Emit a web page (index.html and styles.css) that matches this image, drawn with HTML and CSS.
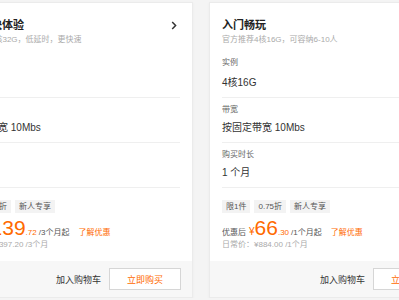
FILE: index.html
```html
<!DOCTYPE html>
<html lang="zh-CN">
<head>
    <meta charset="UTF-8">
    <meta name="viewport" content="width=device-width, initial-scale=1.0">
    <title>游戏服务器套餐</title>
    <link rel="stylesheet" href="styles.css">
</head>
<body>
    <div class="plans">
        <!-- Plan 1 -->
        <div class="plan">
            <div class="plan-body">
                <div class="plan-head">
                    <h2 class="plan-title">极致畅快体验</h2>
                    <svg class="plan-arrow" width="6" height="9" viewBox="0 0 6 9">
                        <path d="M1.2 1 L4.6 4.5 L1.2 8" fill="none" stroke="#333" stroke-width="1.5"/>
                    </svg>
                </div>
                <p class="plan-desc">官方推荐8核32G，低延时，更快速</p>

                <div class="spec first">
                    <div class="spec-label">实例</div>
                    <div class="spec-value">8核32G</div>
                </div>
                <div class="spec">
                    <div class="spec-label">带宽</div>
                    <div class="spec-value">按固定带宽 10Mbs</div>
                </div>
                <div class="spec">
                    <div class="spec-label">购买时长</div>
                    <div class="spec-value">3 个月</div>
                </div>

                <div class="tags">
                    <span class="tag">限1件</span>
                    <span class="tag">1折</span>
                    <span class="tag">新人专享</span>
                </div>
                <div class="price-row">
                    <span class="price-pre">优惠后</span><span class="price-cur">¥</span><span class="price-int">139</span><span class="price-dec">.72</span><span class="price-unit">/3个月起</span><span class="price-link">了解优惠</span>
                </div>
                <div class="price-old">日常价：¥1397.20 /3个月</div>
            </div>
            <div class="plan-foot">
                <span class="cart">加入购物车</span>
                <button class="buy">立即购买</button>
            </div>
        </div>

        <!-- Plan 2 -->
        <div class="plan">
            <div class="plan-body">
                <div class="plan-head">
                    <h2 class="plan-title">入门畅玩</h2>
                    <svg class="plan-arrow" width="6" height="9" viewBox="0 0 6 9">
                        <path d="M1.2 1 L4.6 4.5 L1.2 8" fill="none" stroke="#333" stroke-width="1.5"/>
                    </svg>
                </div>
                <p class="plan-desc">官方推荐4核16G，可容纳6-10人</p>

                <div class="spec first">
                    <div class="spec-label">实例</div>
                    <div class="spec-value">4核16G</div>
                </div>
                <div class="spec">
                    <div class="spec-label">带宽</div>
                    <div class="spec-value">按固定带宽 10Mbs</div>
                </div>
                <div class="spec">
                    <div class="spec-label">购买时长</div>
                    <div class="spec-value">1 个月</div>
                </div>

                <div class="tags">
                    <span class="tag">限1件</span>
                    <span class="tag">0.75折</span>
                    <span class="tag">新人专享</span>
                </div>
                <div class="price-row">
                    <span class="price-pre">优惠后</span><span class="price-cur">¥</span><span class="price-int">66</span><span class="price-dec">.30</span><span class="price-unit">/1个月起</span><span class="price-link">了解优惠</span>
                </div>
                <div class="price-old">日常价：¥884.00 /1个月</div>
            </div>
            <div class="plan-foot">
                <span class="cart">加入购物车</span>
                <button class="buy">立即购买</button>
            </div>
        </div>
    </div>
</body>
</html>
```

FILE: styles.css
```css
body {
    margin: 0;
    padding: 0;
    background: #f4f4f4;
    font-family: 'Liberation Sans', 'Noto Sans CJK SC', sans-serif;
    color: #333;
    overflow: hidden;
}

.plans {
    display: flex;
    gap: 16px;
    margin-left: -55px;
    padding-top: 2px;
}

.plan {
    width: 248px;
    height: 296px;
    flex-shrink: 0;
    box-sizing: border-box;
    display: flex;
    flex-direction: column;
    background: #fff;
    border: 1px solid #ebebeb;
    box-shadow: 0 1px 3px rgba(0, 0, 0, 0.04);
}

.plan-body {
    flex: 1;
    padding: 14px 12px 0 12px;
}

.plan-head {
    display: flex;
    justify-content: space-between;
    align-items: center;
}

.plan-title {
    margin: 0;
    font-size: 11px;
    line-height: 16px;
    font-weight: bold;
    color: #222;
}

.plan-arrow {
    margin-right: 3px;
}

.plan-desc {
    margin: 0 0 4px;
    font-size: 8px;
    line-height: 14px;
    color: #aaa;
}

.spec {
    padding: 5px 0 4px;
    border-bottom: 1px solid #efefef;
}

.spec-label {
    font-size: 8px;
    line-height: 14px;
    color: #666;
}

.spec-value {
    margin-top: 1px;
    font-size: 10px;
    line-height: 20px;
    color: #333;
}

.spec.first .spec-value {
    margin-top: 3px;
}

.tags {
    display: flex;
    gap: 4px;
    margin-top: 12px;
}

.tag {
    padding: 0 4px;
    font-size: 8px;
    line-height: 13px;
    background: #f3f3f3;
    color: #555;
}

.price-row {
    margin-top: 4px;
    height: 22px;
    line-height: 22px;
    white-space: nowrap;
}

.price-row span {
    line-height: 1;
}

.price-pre {
    font-size: 8px;
    color: #555;
}

.price-cur {
    margin-left: 3px;
    font-size: 10px;
    color: #ff6a00;
}

.price-int {
    font-size: 21px;
    color: #ff6a00;
}

.price-dec {
    font-size: 8px;
    color: #ff6a00;
}

.price-unit {
    margin-left: 2px;
    font-size: 8px;
    color: #555;
}

.price-link {
    margin-left: 9px;
    font-size: 8px;
    color: #ff6a00;
}

.price-old {
    font-size: 8px;
    line-height: 12px;
    color: #aaa;
}

.plan-foot {
    height: 36px;
    display: flex;
    justify-content: flex-end;
    align-items: center;
    gap: 8px;
    padding-right: 11px;
    background: #f7f7f7;
}

.cart {
    font-size: 9px;
    color: #333;
}

.buy {
    width: 72px;
    height: 22px;
    padding: 0;
    border: 1px solid #d6d6d6;
    background: #fff;
    color: #ff6a00;
    font-family: inherit;
    font-size: 9px;
    cursor: pointer;
}
```
